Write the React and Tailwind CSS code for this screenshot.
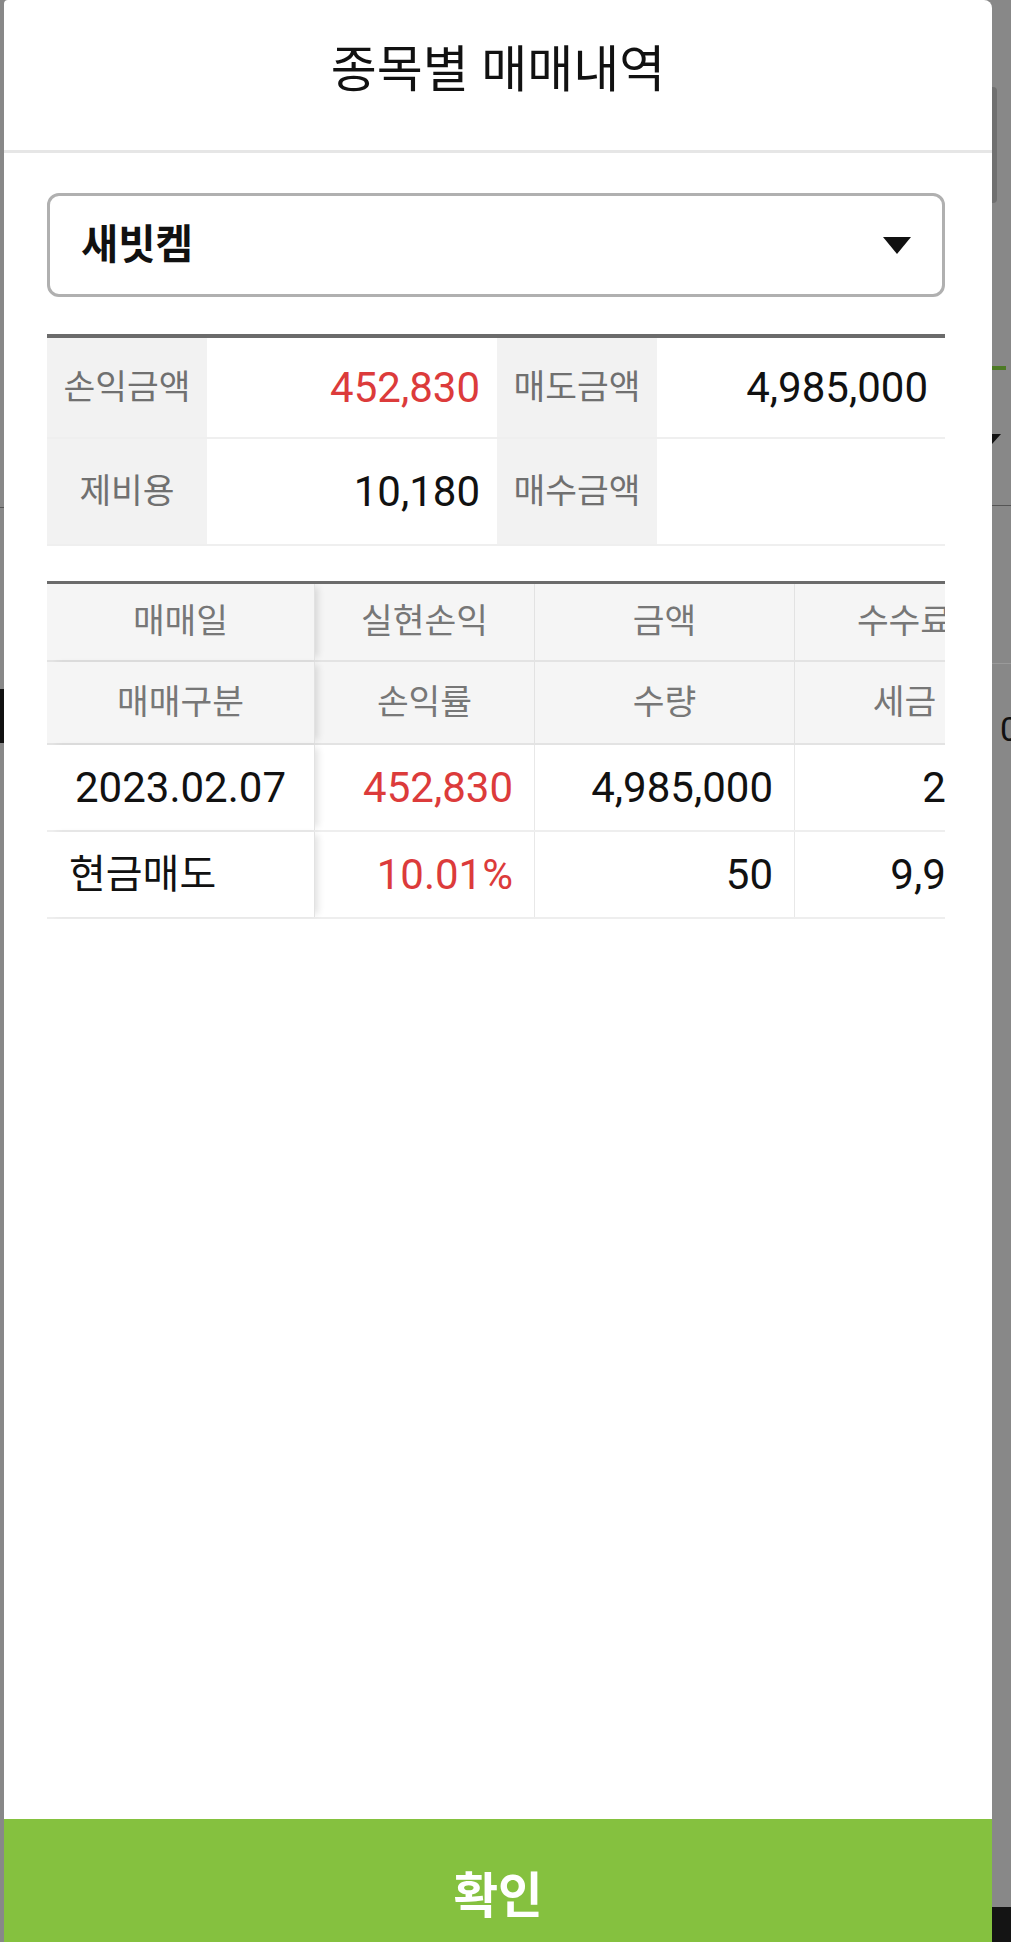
import React from "react";

const summary = [
  [
    { label: "손익금액", value: "452,830", red: true },
    { label: "매도금액", value: "4,985,000" },
  ],
  [
    { label: "제비용", value: "10,180" },
    { label: "매수금액", value: "" },
  ],
];

const colWidths = ["w-[268px]", "w-[220px]", "w-[260px]", "w-[220px]"];

const headRows = [
  ["매매일", "실현손익", "금액", "수수료"],
  ["매매구분", "손익률", "수량", "세금"],
];

const trades = [
  {
    h: "h-[87px]",
    cells: [
      { text: "2023.02.07", align: "center" },
      { text: "452,830", red: true },
      { text: "4,985,000" },
      { text: "210" },
    ],
  },
  {
    h: "h-[87px]",
    cells: [
      { text: "현금매도", align: "left", ko: true },
      { text: "10.01%", red: true },
      { text: "50" },
      { text: "9,970" },
    ],
  },
];

function Caret() {
  return (
    <svg width="28" height="17" viewBox="0 0 28 17">
      <path d="M0 0 L28 0 L14 17 Z" fill="#111" />
    </svg>
  );
}

function SummaryTable() {
  return (
    <div className="mt-[37px] border-t-[4px] border-[#6b6b6b] grid grid-cols-[160px_290px_160px_1fr]">
      {summary.map((row, i) =>
        row.map((c) => (
          <React.Fragment key={c.label}>
            <div
              className={`${i === 0 ? "h-[101px]" : "h-[107px]"} flex items-center justify-center bg-[#f2f2f2] border-b-2 border-[#efefef] text-[34.5px] text-[#707070]`}
            >
              {c.label}
            </div>
            <div
              className={`${i === 0 ? "h-[101px]" : "h-[107px]"} flex items-center justify-end pr-[17px] border-b-2 border-[#efefef] text-[42px] ${c.red ? "text-[#dc3b3b]" : "text-[#111]"}`}
            >
              {c.value}
            </div>
          </React.Fragment>
        ))
      )}
    </div>
  );
}

function TradeTable() {
  return (
    <div className="mt-[35px] border-t-[3px] border-[#6b6b6b] overflow-hidden">
      <div className="w-[968px]">
        {headRows.map((row, i) => (
          <div
            key={i}
            className={`flex ${i === 0 ? "h-[78px]" : "h-[83px]"} bg-[#f5f5f5] border-b-2 border-[#e3e3e3]`}
          >
            {row.map((t, j) => (
              <div
                key={t}
                className={`${colWidths[j]} shrink-0 flex items-center justify-center text-[34.5px] text-[#777] ${
                  j === 0
                    ? "relative z-10 bg-[#f5f5f5] border-r border-[#e2e2e2] shadow-[6px_0_7px_-3px_rgba(0,0,0,0.12)]"
                    : "border-r border-[#e2e2e2]"
                }`}
              >
                {t}
              </div>
            ))}
          </div>
        ))}
        {trades.map((row, i) => (
          <div key={i} className={`flex ${row.h} border-b-2 border-[#eeeeee]`}>
            {row.cells.map((c, j) => (
              <div
                key={j}
                className={`${colWidths[j]} shrink-0 flex items-center ${
                  c.align === "center"
                    ? "justify-center"
                    : c.align === "left"
                    ? "justify-start pl-[22px]"
                    : "justify-end pr-[21px]"
                } ${c.ko ? "text-[40px]" : "text-[42px]"} ${
                  c.red ? "text-[#dc3b3b]" : "text-[#111]"
                } ${
                  j === 0
                    ? "relative z-10 bg-white border-r border-[#e2e2e2] shadow-[6px_0_7px_-3px_rgba(0,0,0,0.12)]"
                    : "border-r border-[#e8e8e8]"
                }`}
              >
                {c.text}
              </div>
            ))}
          </div>
        ))}
      </div>
    </div>
  );
}

export default function App() {
  return (
    <div className="w-[1011px] h-[1942px] flex bg-[#888] overflow-hidden font-['Roboto','Noto_Sans_CJK_KR',sans-serif]">
      {/* left edge of the page behind the modal */}
      <div className="w-[4px] shrink-0 flex flex-col">
        <div className="h-[507px]" />
        <div className="h-[1px] bg-[#555]" />
        <div className="h-[181px]" />
        <div className="h-[54px] bg-[#111]" />
      </div>

      <div className="w-[988px] shrink-0 h-full flex flex-col bg-white rounded-tr-[8px] rounded-tl-[4px]">
        <div className="h-[153px] shrink-0 flex items-center justify-center pb-[10px] border-b-[3px] border-[#e6e6e6]">
          <h1 className="text-[50px] leading-none text-[#111]">종목별 매매내역</h1>
        </div>

        <div className="flex-1 pl-[43px] pr-[47px]">
          <div className="mt-[40px] h-[104px] border-[3px] border-[#b0b0b0] rounded-[12px] flex items-center justify-between pl-[31px] pr-[31px]">
            <span className="text-[40.5px] font-bold text-[#111]">새빗켐</span>
            <Caret />
          </div>

          <SummaryTable />
          <TradeTable />
        </div>

        <div className="h-[123px] shrink-0 bg-[#85c13f] flex justify-center pt-[54px]">
          <span className="text-[48.5px] leading-none font-bold text-white">확인</span>
        </div>
      </div>

      {/* right edge of the page behind the modal */}
      <div className="flex-1 min-w-0 overflow-hidden flex flex-col">
        <div className="h-[87px]" />
        <div className="h-[116px] w-[5px] rounded-r-[4px] bg-[#707070]" />
        <div className="h-[163px]" />
        <div className="h-[4px] w-[14px] bg-[#4d7a25]" />
        <div className="h-[64px]" />
        <svg width="9" height="10" viewBox="0 0 9 10">
          <path d="M0 0 L9 0 L0 10 Z" fill="#111" />
        </svg>
        <div className="h-[61px]" />
        <div className="h-[1px] bg-[#555]" />
        <div className="h-[157px]" />
        <div className="h-[1px] bg-[#9a9a9a]" />
        <div className="h-[48px]" />
        <span className="pl-[8px] text-[34px] leading-none text-[#111] whitespace-nowrap">0</span>
        <div className="flex-1" />
        <div className="h-[35px] bg-[#141414]" />
      </div>
    </div>
  );
}
